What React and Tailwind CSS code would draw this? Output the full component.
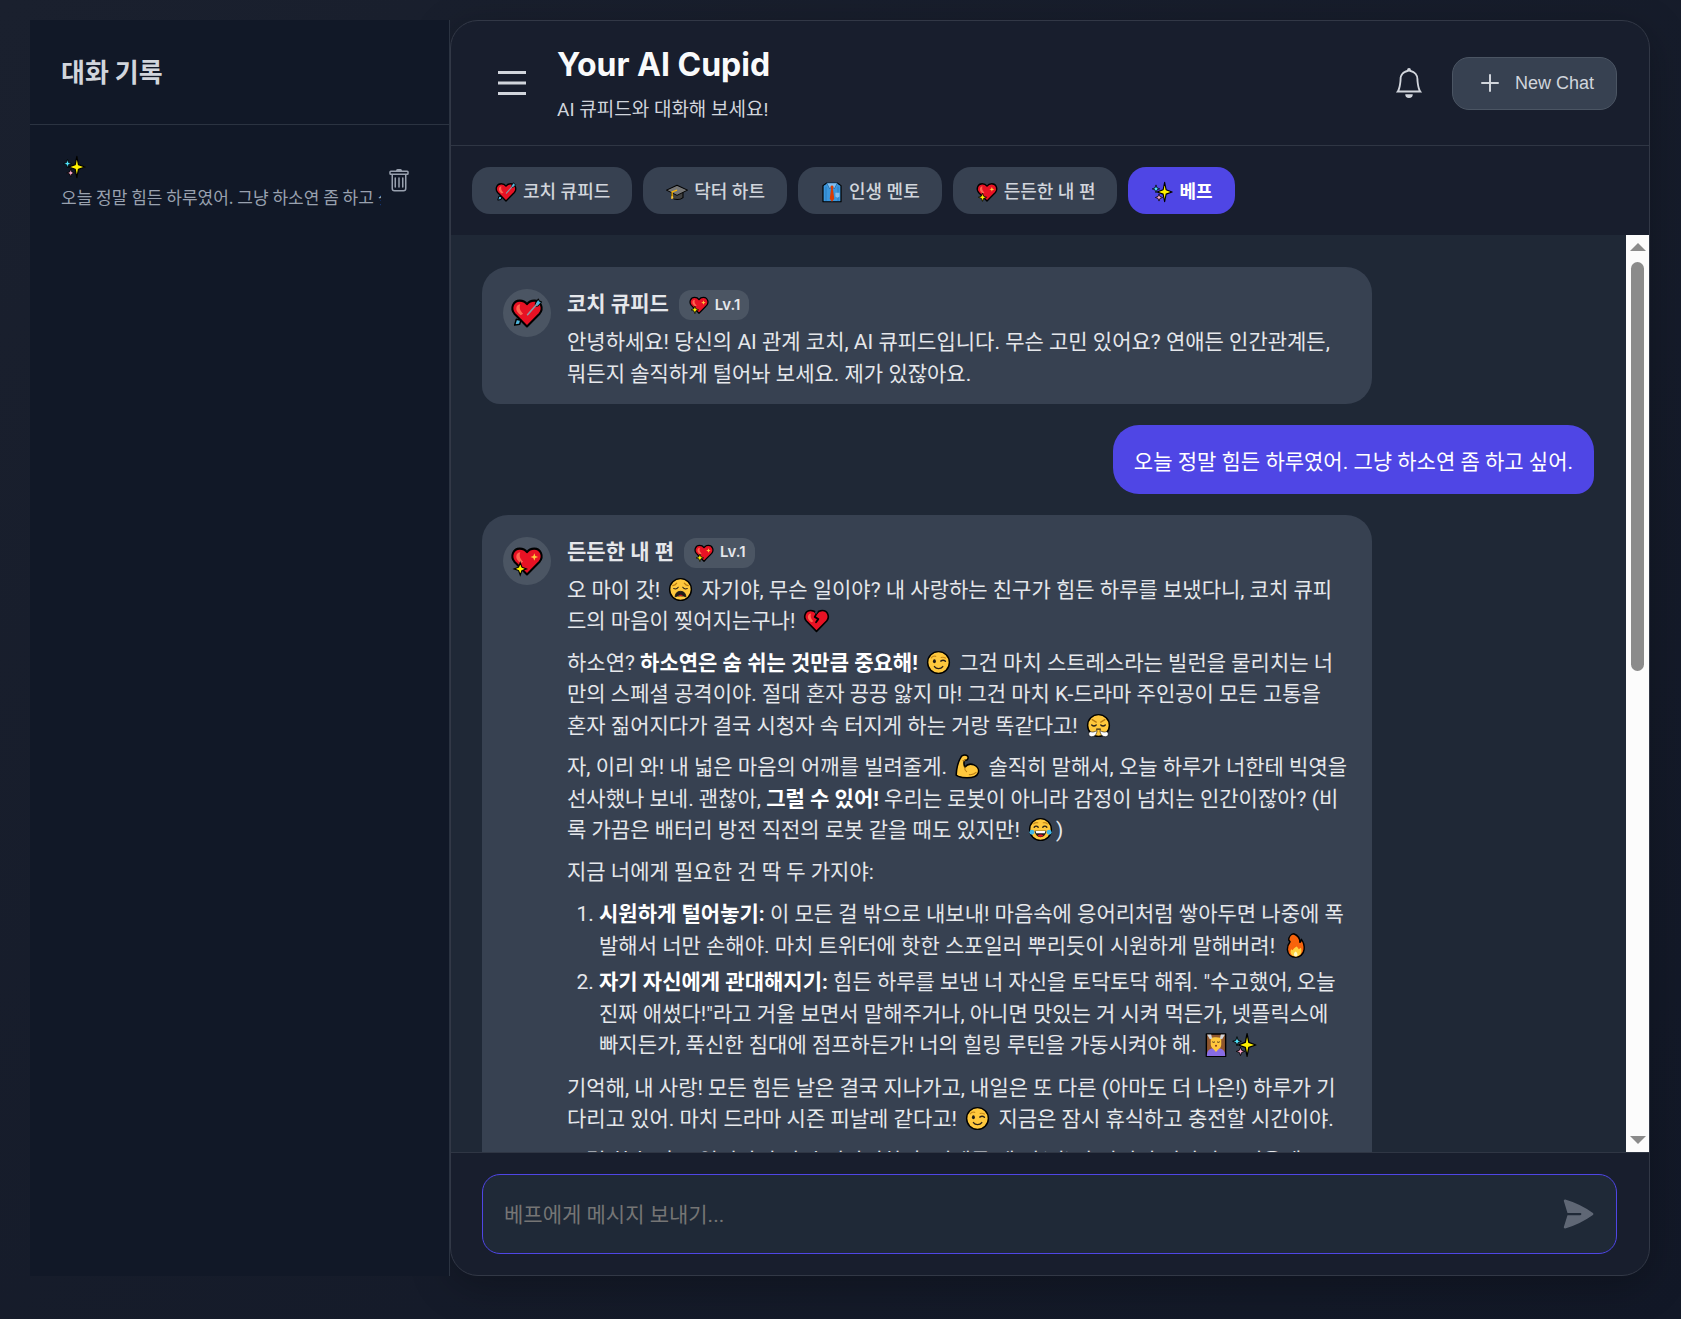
import React from "react";
import { BsBell, BsTrash } from "react-icons/bs";

const HEART = "M16 28 4.8 16.6C1 12 3.6 5 9.6 5c2.8 0 5 1.2 6.4 3.2C17.4 6.2 19.6 5 22.4 5c6 0 8.600 7 4.800 11.600Z";

const Face = ({ children }) => (
  <>
    <circle cx="16" cy="16" r="12" fill="#ffc83d" stroke="#000" strokeWidth="1.6" />
    {children}
  </>
);

const Stroke = ({ d, c = "#2b2118", w = 1.5 }) => (
  <path d={d} fill="none" stroke={c} strokeWidth={w} strokeLinecap="round" strokeLinejoin="round" />
);

const Heart = () => (
  <>
    <path d={HEART} fill="#e81224" stroke="#000" strokeWidth="1.8" strokeLinejoin="round" />
    <path d="M6.500 11.500c.4-2 1.800-3.200 3.500-3.200-1.200 3.400 0 6 2.600 8.400l-2.200 1.300c-2.600-2.200-4.300-4-3.900-6.500Z" fill="#ff6550" />
  </>
);

const GLYPHS = {
  "💘": (
    <>
      <Heart />
      <path d="m26 3.500 1 1.800 2 .9-3.200 3.600-2.500.2.200-2.800Z" fill="#50b8e0" stroke="#000" strokeWidth=".9" strokeLinejoin="round" />
      <path d="M24.500 8.500 16.500 17.500" stroke="#8a97a5" strokeWidth="1.500" strokeLinecap="round" />
      <path d="M6.500 21.500 10.500 22.500l-1 3.500-4.500.8Z" fill="#50b8e0" stroke="#000" strokeWidth="1.300" strokeLinejoin="round" />
    </>
  ),
  "💖": (
    <>
      <Heart />
      <path d="m22.500 9 .9 2.500 2.500.9-2.500.9-.9 2.500-.9-2.500-2.500-.9 2.500-.9Z" fill="#ffc83d" />
      <path d="m10 17.500 1.500 4 4 1.500-4 1.500-1.500 4-1.500-4-4-1.500 4-1.500Z" fill="#fff100" stroke="#000" strokeWidth="1" />
    </>
  ),
  "💔": (
    <>
      <Heart />
      <path d="m17 7-3 5 4 2.500-2.500 3.500" fill="none" stroke="#000" strokeWidth="2" strokeLinejoin="round" strokeLinecap="round" />
      <path d="m16.500 4.500 1 1.500-2 3-1.500-2Z" fill="#374151" />
    </>
  ),
  "✨": (
    <>
      <path d="M19.500 3 21.500 13 29.500 16 21.500 18.800 19.500 29 17.500 18.800 9.500 16 17.500 13Z" fill="#fff100" stroke="#000" strokeWidth="1.500" strokeLinejoin="round" />
      <path d="m8 6.500 1.300 4 3.700 1.300-3.700 1.300-1.300 4-1.300-4L3 11.800l3.700-1.300Z" fill="#50e6ff" stroke="#000" strokeWidth="1" />
      <path d="m12 18.500 1.300 3.500 3.500 1.300-3.500 1.300-1.300 3.500-1.300-3.500-3.500-1.300 3.500-1.300Z" fill="#f8a5c8" stroke="#000" strokeWidth="1" />
    </>
  ),
  "🎓": (
    <>
      <path d="M9 15v8.500c4 3.500 11 3.500 15 0V15Z" fill="#404040" stroke="#000" strokeWidth="1.400" strokeLinejoin="round" />
      <path d="m16 7 14 6.500-14 7-14-7Z" fill="#767676" stroke="#000" strokeWidth="1.400" strokeLinejoin="round" />
      <path d="m16 13.500-6.500 2.500V23" fill="none" stroke="#ffb900" strokeWidth="1.700" />
      <path d="M8.500 21.500h2.200l.6 3.500H8Z" fill="#ffc83d" />
    </>
  ),
  "👔": (
    <>
      <path d="M4 7.500 9 4h14l5 3.500V29H4Z" fill="#3a96dd" stroke="#000" strokeWidth="1.600" strokeLinejoin="round" />
      <path d="M8 9v19M24 9v19" stroke="#2573b5" strokeWidth="1" />
      <path d="m9 4 4 8 3-4 3 4 4-8Z" fill="#83beec" stroke="#1c5c96" strokeWidth=".8" strokeLinejoin="round" />
      <path d="m14 8.500 2-1.500 2 1.500-.7 3.500L19 25l-3 4-3-4 1.700-13Z" fill="#da3b01" />
      <path d="M20.500 17h5.500v5l-2.700 1.500-2.800-1.500Z" fill="#83beec" />
    </>
  ),
  "😩": (
    <Face>
      <Stroke d="M7.500 11.800c1.800-.2 3.300-1.200 4.300-2.800M24.500 11.800c-1.800-.2-3.300-1.200-4.300-2.800" c="#b87a12" w={1.300} />
      <Stroke d="M8.500 15c2 .8 3.800.3 5-1.500M23.500 15c-2 .8-3.800.3-5-1.500" w={1.200} />
      <path d="M10 24c.3-4 2.700-6 6-6s5.700 2 6 6c-3.200-1.300-8.800-1.300-12 0Z" fill="#1f1a17" stroke="#1f1a17" />
      <path d="M13.500 22.800c1-1.400 4-1.400 5 0Z" fill="#e81224" />
    </Face>
  ),
  "😉": (
    <Face>
      <ellipse cx="11.500" cy="14.500" rx="1.600" ry="2.200" fill="#1f1a17" />
      <Stroke d="M18.500 14.500c1.600-1.300 3.600-1.300 5.200.2M11.500 20.500c2.200 3 7 3 9.200 0" />
      <Stroke d="M8 10.800c1.300-1.600 3-2.200 5-1.600M19 10.500c1.600-.6 3.200-.3 4.600.6" c="#c98b1a" w={1.300} />
    </Face>
  ),
  "😤": (
    <Face>
      <Stroke d="M8.500 15.500c1.500 1.300 3.500 1.300 5 0M18.500 15.500c1.500 1.300 3.500 1.300 5 0M14 20h4" />
      <Stroke d="m9 9.500 4.500 2.700M23 9.500l-4.500 2.700" c="#b87a12" />
      <path d="M14.500 21.500c-.5 3-1.500 6-4.500 6.700-3 .6-5-.7-4.800-3 .2-2 1.600-2.700 2.800-2.200 1.800.6 4 0 6.500-1.500ZM17.500 21.500c.5 3 1.500 6 4.500 6.700 3 .6 5-.7 4.800-3-.2-2-1.600-2.700-2.800-2.200-1.800.6-4 0-6.500-1.500Z" fill="#fff" stroke="#000" strokeWidth=".6" />
    </Face>
  ),
  "😂": (
    <Face>
      <Stroke d="M9 13.500c1.300-1.700 3.200-1.700 4.500 0M18.500 13.500c1.300-1.700 3.200-1.700 4.500 0" />
      <Stroke d="M8.500 9.800c1.300-1.200 2.800-1.600 4.500-1.200M23.500 9.800c-1.300-1.200-2.800-1.600-4.500-1.200" c="#c98b1a" w={1.300} />
      <path d="M9.500 17.500h13c-.5 4.500-3.300 7-6.500 7s-6-2.500-6.500-7Z" fill="#1f1a17" />
      <path d="M10.500 17.700h11l-.8 2.300h-9.400Z" fill="#fff" />
      <path d="M12.800 23c1.500-2 4.900-2 6.400 0-1.800 1.400-4.600 1.400-6.400 0Z" fill="#e81224" />
      <circle cx="6.500" cy="19" r="2.700" fill="#40b8e8" />
      <circle cx="25.500" cy="19" r="2.700" fill="#40b8e8" />
    </Face>
  ),
  "💪": (
    <>
      <path d="M9.500 4.500c2-1.300 5-1.500 6.500 0 1.200 1.300.8 3.500-.8 4.300l-2.700.7c-.7 2.500-.5 5 .5 7.200 2.500-3 6.500-4 10-2.500 4 1.700 6 5.500 4.800 9-1.400 4-6.300 5.300-12.300 5.300-6 0-10-1.500-12-3 .3-7 2-15 6-21Z" fill="#ffc83d" stroke="#000" strokeWidth="1.700" strokeLinejoin="round" />
      <Stroke d="M13 16.700c-.3 2.300.3 3.700 2 5M11 9.500h2M18 25c3 .3 5.500-.5 7.500-2.500" c="#b87a12" w={1.200} />
    </>
  ),
  "🔥": (
    <>
      <path d="M14 3c5 2 7 5.500 6.800 9.500 1-.8 1.500-2 1.700-3.300 2.500 3.300 3.500 7 3 11.300-.6 5-4.500 8.500-9.500 8.500S7.500 25.500 7 20.500c-.3-3.500 1.300-6.500 3-8.700L8.500 10c0-3.500 2.500-6.500 5.500-7Z" fill="#f7630c" stroke="#000" strokeWidth="1.600" strokeLinejoin="round" />
      <path d="m17.500 17 2.200 3 2.300-1.500c1.500 4.500.2 9.500-5.500 9.500-5.500 0-7.200-4.500-5.200-8l1.700 1.200c.3-1.700 2.300-3.200 4.500-4.200Z" fill="#ffd23e" />
      <path d="M16 22.500c2.500 1.500 3.200 5.500.5 5.500s-3.200-3.500-.5-5.500Z" fill="#fffbc0" />
    </>
  ),
  "💆": (
    <>
      <path d="M5 3.500h22V29H5Z" fill="#8e562e" stroke="#000" strokeWidth="1.600" strokeLinejoin="round" />
      <path d="M5.500 28.500c0-6 3-8.500 7-8.500h7c4 0 7 2.500 7 8.500Z" fill="#886ce4" />
      <path d="M10 8c3.500-1 8.500-1 12 0v7c0 4-2.500 6-6 6s-6-2-6-6Z" fill="#ffc83d" />
      <path d="M5.800 4h4.700l1 4.500-2.500 1ZM26.200 4h-4.700l-1 4.500 2.500 1Z" fill="#d0d4da" />
      <path d="M13.500 18.500h5V21L16 24l-2.500-3Z" fill="#ffc83d" />
      <Stroke d="M12 12.500c.8.700 1.700.7 2.500 0M17.500 12.500c.8.700 1.700.7 2.500 0" w={1} />
      <ellipse cx="16" cy="16.800" rx="1" ry="1.200" fill="#7a1c1c" />
    </>
  ),
};

const SIZES = {
  sm: "w-[22px] h-[22px]",
  md: "w-6 h-6",
  side: "w-[26px] h-[26px]",
  tight: "w-[28px] h-[28px]",
  lg: "w-[31px] h-[29px]",
  xl: "w-[36px] h-[36px]",
};

function Emoji({ e, size = "lg" }) {
  return (
    <svg viewBox="0 0 32 32" role="img" aria-label={e} className={`inline-block shrink-0 align-[-7px] ${SIZES[size]}`}>
      {GLYPHS[e]}
    </svg>
  );
}

const B = ({ children }) => <strong className="font-bold text-white">{children}</strong>;

const personas = [
  { e: "💘", name: "코치 큐피드" },
  { e: "🎓", name: "닥터 하트" },
  { e: "👔", name: "인생 멘토" },
  { e: "💖", name: "든든한 내 편" },
  { e: "✨", name: "베프", active: true },
];

function BotMessage({ avatar, name, children }) {
  return (
    <article className="flex max-w-[80%] gap-4 self-start rounded-[26px] rounded-bl-[18px] bg-[#374151] px-[21px] pt-4 pb-[14px]">
      <div className="mt-[6px] flex size-12 shrink-0 items-center justify-center rounded-full bg-[#4b5563]">
        <Emoji e={avatar} size="xl" />
      </div>
      <div className="min-w-0">
        <header className="flex h-11 items-center gap-[10px]">
          <h2 className="font-bold text-gray-200">{name}</h2>
          <span className="flex h-[30px] items-center gap-[5px] rounded-xl bg-[#4b5563] px-[9px] font-['Inter',sans-serif] text-[15px] font-semibold text-gray-200">
            <Emoji e="💖" size="sm" />
            Lv.1
          </span>
        </header>
        <div className="flex flex-col gap-[10px]">{children}</div>
      </div>
    </article>
  );
}

function Sidebar() {
  return (
    <aside className="relative z-10 flex w-[420px] shrink-0 flex-col border-r border-[#2b3341] bg-[#111827] font-['Noto_Sans_CJK_KR',sans-serif]">
      <div className="border-b border-[#2b3341] px-[31px] pt-[31px] pb-[33px]">
        <h2 className="text-[26px] leading-10 font-bold text-gray-300">대화 기록</h2>
      </div>
      <ul className="py-[26px] pr-[38px] pl-[31px]">
        <li className="flex items-center gap-[6px]">
          <a href="#chat" className="min-w-0 flex-1 overflow-hidden text-[17px] leading-7 whitespace-nowrap text-gray-400">
            <span className="flex h-8 items-center">
              <Emoji e="✨" size="side" />
            </span>
            오늘 정말 힘든 하루였어. 그냥 하소연 좀 하고 싶어.
          </a>
          <button type="button" aria-label="삭제" className="text-gray-400">
            <BsTrash className="size-6" />
          </button>
        </li>
      </ul>
    </aside>
  );
}

function ChatHeader() {
  return (
    <header className="flex items-center border-b border-[#2f3644] pr-8 pl-[31px] py-5">
      <button type="button" aria-label="메뉴" className="flex w-[60px] justify-center text-gray-300">
        <svg viewBox="0 0 28 26" className="h-[26px] w-7" stroke="currentColor" strokeWidth="3">
          <path d="M0 2.500h28M0 13h28M0 23.500h28" />
        </svg>
      </button>
      <div className="ml-[15px] flex-1">
        <h1 className="font-['Inter',sans-serif] text-[32px] leading-[48px] font-bold text-gray-50">Your AI Cupid</h1>
        <p className="pt-[6px] text-[19px] leading-[30px] text-gray-300">AI 큐피드와 대화해 보세요!</p>
      </div>
      <button type="button" aria-label="알림" className="mr-7 text-gray-300">
        <BsBell className="size-[30px]" />
      </button>
      <button type="button" className="flex h-[53px] items-center gap-[10px] rounded-[17px] border border-[#4b5563] bg-[#374151] px-[22px] font-['Liberation_Sans',sans-serif] text-lg text-gray-300">
        <svg viewBox="0 0 30 20" className="h-5 w-[30px]" stroke="currentColor" strokeWidth="2" strokeLinecap="round">
          <path d="M15 2v16M7 10h16" />
        </svg>
        New Chat
      </button>
    </header>
  );
}

function ScrollBar() {
  return (
    <div aria-hidden="true" className="flex w-[23px] shrink-0 flex-col items-center bg-[#fcfcfc] py-2">
      <svg viewBox="0 0 16 8" className="h-2 w-4" fill="#8b8b8b"><path d="M8 0 16 8H0Z" /></svg>
      <div className="flex min-h-0 w-full flex-1 flex-col items-center py-[11px]">
        <div className="w-[13px] rounded-full bg-[#8b8b8b]" style={{ height: "47.4%" }} />
      </div>
      <svg viewBox="0 0 16 8" className="h-2 w-4" fill="#8b8b8b"><path d="M0 0h16L8 8Z" /></svg>
    </div>
  );
}

export default function App() {
  return (
    <div className="flex h-screen justify-center bg-linear-to-br from-[#1a202e] to-[#121827] pt-5 pr-[31px] pb-[43px] pl-[30px] font-['Roboto','Noto_Sans_CJK_KR',sans-serif] text-[21px] leading-normal">
      <div className="flex w-full max-w-[1620px]">
        <Sidebar />
        <main className="flex min-w-0 flex-1 flex-col overflow-hidden rounded-[28px] border border-[#323846] bg-[#181e2d] shadow-[0_10px_40px_rgba(0,0,0,0.25)]">
          <ChatHeader />
          <nav className="flex gap-[11px] px-[21px] py-[21px]">
            {personas.map((p) => (
              <button
                key={p.name}
                type="button"
                className={
                  p.active
                    ? "flex h-[47px] items-center gap-[5px] rounded-[18px] bg-[#4f46e5] px-[22px] pt-[3px] text-lg font-semibold text-white"
                    : "flex h-[47px] items-center gap-[5px] rounded-[18px] bg-[#374151] px-[22px] pt-[3px] text-lg font-medium text-gray-300"
                }
              >
                <Emoji e={p.e} size="md" />
                {p.name}
              </button>
            ))}
          </nav>

          <div className="flex min-h-0 flex-1">
            <section className="flex min-w-0 flex-1 flex-col gap-[21px] overflow-y-auto bg-[#1f2836] py-8 pr-8 pl-[31px] text-gray-200 [scrollbar-width:none] *:shrink-0">
              <BotMessage avatar="💘" name="코치 큐피드">
                <p>안녕하세요! 당신의 AI 관계 코치, AI 큐피드입니다. 무슨 고민 있어요? 연애든 인간관계든, 뭐든지 솔직하게 털어놔 보세요. 제가 있잖아요.</p>
              </BotMessage>

              <p className="max-w-[80%] self-end rounded-[26px] rounded-br-[18px] bg-[#4f46e5] px-[21px] pt-[22px] pb-[15px] text-white">
                오늘 정말 힘든 하루였어. 그냥 하소연 좀 하고 싶어.
              </p>

              <BotMessage avatar="💖" name="든든한 내 편">
                <p>
                  오 마이 갓! <Emoji e="😩" /> 자기야, 무슨 일이야? 내 사랑하는 친구가 힘든 하루를 보냈다니, 코치 큐피드의 마음이 찢어지는구나! <Emoji e="💔" />
                </p>
                <p>
                  하소연? <B>하소연은 숨 쉬는 것만큼 중요해!</B> <Emoji e="😉" /> 그건 마치 스트레스라는 빌런을 물리치는 너만의 스페셜 공격이야. 절대 혼자 끙끙 앓지 마! 그건 마치 K-드라마 주인공이 모든 고통을 <span className="whitespace-nowrap">혼자</span> 짊어지다가 결국 시청자 속 터지게 하는 거랑 똑같다고! <Emoji e="😤" />
                </p>
                <p>
                  자, 이리 와! 내 넓은 마음의 어깨를 빌려줄게. <Emoji e="💪" /> 솔직히 말해서, 오늘 하루가 너한테 빅엿을 선사했나 보네. 괜찮아, <B>그럴 수 있어!</B> 우리는 로봇이 아니라 감정이 넘치는 인간이잖아? (비록 가끔은 배터리 방전 직전의 로봇 같을 때도 있지만! <Emoji e="😂" />)
                </p>
                <p>지금 너에게 필요한 건 딱 두 가지야:</p>
                <ol className="my-px flex list-decimal flex-col gap-[5px] pl-8">
                  <li>
                    <B>시원하게 털어놓기:</B> 이 모든 걸 밖으로 내보내! 마음속에 응어리처럼 쌓아두면 나중에 폭발해서 너만 손해야. 마치 트위터에 핫한 스포일러 뿌리듯이 시원하게 말해버려! <Emoji e="🔥" />
                  </li>
                  <li>
                    <B>자기 자신에게 관대해지기:</B> 힘든 하루를 보낸 너 자신을 토닥토닥 해줘. "수고했어, 오늘 진짜 애썼다!"라고 거울 보면서 말해주거나, 아니면 맛있는 거 시켜 먹든가, 넷플릭스에 빠지든가, 푹신한 침대에 점프하든가! 너의 힐링 루틴을 가동시켜야 해. <Emoji e="💆" size="tight" /><Emoji e="✨" size="tight" />
                  </li>
                </ol>
                <p>
                  기억해, 내 사랑! 모든 힘든 날은 결국 지나가고, 내일은 또 다른 (아마도 더 나은!) 하루가 기다리고 있어. 마치 드라마 시즌 피날레 같다고! <Emoji e="😉" /> 지금은 잠시 휴식하고 충전할 시간이야.
                </p>
                <p>그럼 한숨 자고 일어나서 다시 이야기하자. 언제든 네 편(나)이 여기서 기다리고 있을게.</p>
              </BotMessage>
            </section>
            <ScrollBar />
          </div>

          <form className="border-t border-[#2f3644] py-[21px] pr-8 pl-[31px]" onSubmit={(ev) => ev.preventDefault()}>
            <div className="flex h-20 items-center rounded-[18px] border border-[#4f46e5] bg-[#1f2937] pr-5 pl-[21px]">
              <input
                type="text"
                aria-label="메시지"
                placeholder="베프에게 메시지 보내기..."
                className="h-full min-w-0 flex-1 bg-transparent pt-0.5 text-gray-200 outline-none placeholder:text-[#757575]"
              />
              <button type="submit" aria-label="보내기" className="text-[#5f6775]">
                <svg viewBox="0 0 24 24" fill="currentColor" className="size-9">
                  <path d="M3.478 2.404a.75.75 0 0 0-.926.941l2.432 7.905H13.500a.75.75 0 0 1 0 1.500H4.984l-2.432 7.905a.75.75 0 0 0 .926.94 60.519 60.519 0 0 0 18.445-8.986.75.75 0 0 0 0-1.218A60.517 60.517 0 0 0 3.478 2.404Z" />
                </svg>
              </button>
            </div>
          </form>
        </main>
      </div>
    </div>
  );
}
